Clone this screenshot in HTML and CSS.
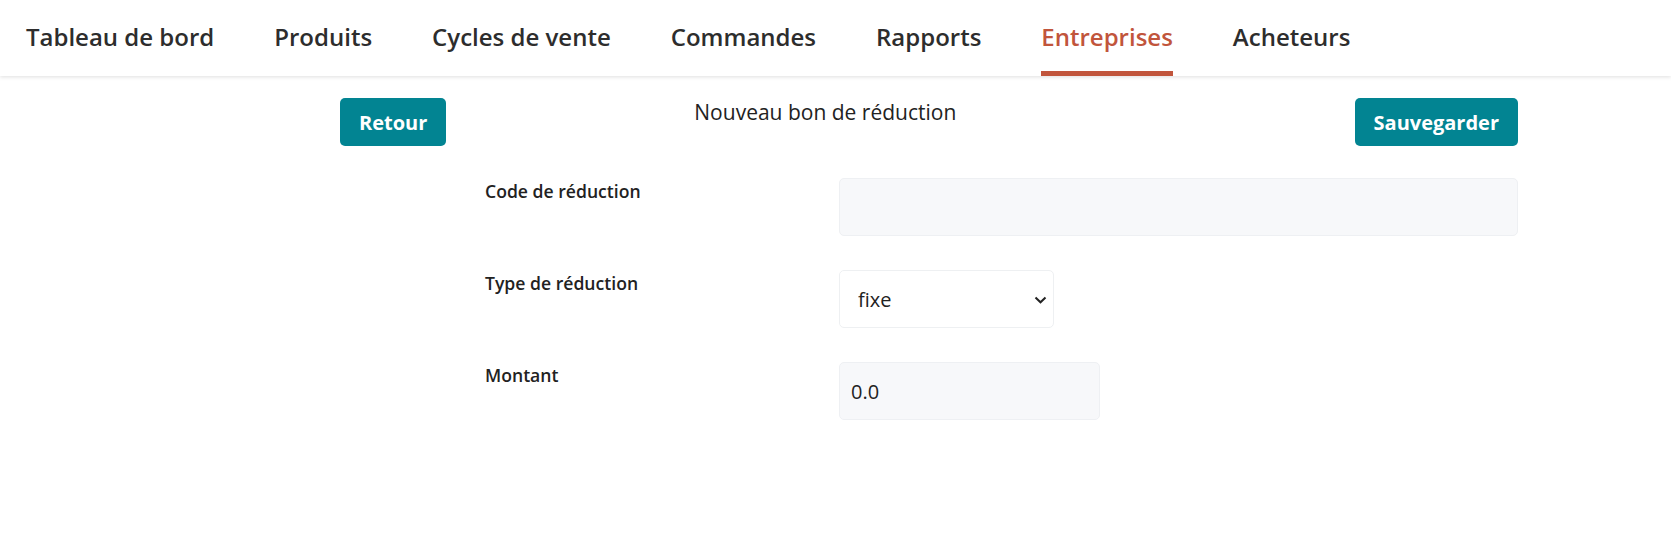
FILE: index.html
```html
<!DOCTYPE html>
<html lang="fr">
<head>
<meta charset="utf-8">
<title>Nouveau bon de réduction</title>
<link rel="stylesheet" href="styles.css">
</head>
<body>
<header class="topbar">
  <nav class="tabs">
    <a class="tab" href="#">Tableau de bord</a>
    <a class="tab" href="#">Produits</a>
    <a class="tab" href="#">Cycles de vente</a>
    <a class="tab" href="#">Commandes</a>
    <a class="tab" href="#">Rapports</a>
    <a class="tab tab-active" href="#">Entreprises</a>
    <a class="tab" href="#">Acheteurs</a>
  </nav>
</header>
<main class="page">
  <div class="toolbar">
    <button class="btn" type="button">Retour</button>
    <h1 class="title">Nouveau bon de réduction</h1>
    <button class="btn btn-save" type="button">Sauvegarder</button>
  </div>
  <form class="form">
    <div class="row">
      <label class="label" for="code">Code de réduction</label>
      <input class="input input-wide" id="code" type="text">
    </div>
    <div class="row">
      <label class="label" for="type">Type de réduction</label>
      <div class="select-wrap">
        <select class="select" id="type">
          <option>fixe</option>
          <option>pourcentage</option>
        </select>
        <svg class="chevron" width="13" height="8" viewBox="0 0 13 8" aria-hidden="true"><path d="M1.5 1.5 L6.5 6.3 L11.5 1.5" fill="none" stroke="#222" stroke-width="2"/></svg>
      </div>
    </div>
    <div class="row">
      <label class="label" for="amount">Montant</label>
      <input class="input input-amount" id="amount" type="text" value="0.0">
    </div>
  </form>
</main>
</body>
</html>
```

FILE: styles.css
```css
* { box-sizing: border-box; }

body {
  margin: 0;
  font-family: "Open Sans", "Noto Sans", sans-serif;
  color: #222;
  background: #fff;
}

.topbar {
  height: 76px;
  background: #fff;
  box-shadow: 0 1px 4px rgba(0, 0, 0, 0.13);
}

.tabs {
  display: flex;
  gap: 60px;
  padding-left: 26px;
  height: 100%;
}

.tab {
  display: block;
  height: 76px;
  padding-top: 20px;
  border-bottom: 5px solid transparent;
  font-size: 24px;
  font-weight: 600;
  line-height: 33px;
  color: #2d2d2d;
  text-decoration: none;
}

.tab-active {
  color: #c1553c;
  border-bottom-color: #c1553c;
}

.page {
  padding: 22px 153px 0 340px;
}

.toolbar {
  display: flex;
  align-items: flex-start;
}

.btn {
  height: 48px;
  padding: 0 19px;
  border: 0;
  border-radius: 5px;
  background: #028492;
  color: #fff;
  font-family: inherit;
  font-size: 20px;
  font-weight: 700;
  cursor: pointer;
}

.btn-save {
  margin-left: auto;
}

.title {
  margin: 0 0 0 248px;
  font-size: 21px;
  font-weight: 400;
  line-height: 28px;
  color: #222;
}

.form {
  margin: 32px 0 0 145px;
  display: flex;
  flex-direction: column;
  gap: 34px;
}

.row {
  display: grid;
  grid-template-columns: 354px 1fr;
  align-items: start;
}

.label {
  font-size: 17.6px;
  font-weight: 600;
  line-height: 26px;
  color: #222;
}

.input {
  height: 58px;
  padding: 0 11px;
  border: 1px solid #eef0f3;
  border-radius: 5px;
  background: #f7f8fa;
  font-family: inherit;
  font-size: 20px;
  color: #222;
  outline: none;
}

.input-wide { width: 100%; }
.input-amount { width: 261px; }

.select-wrap {
  position: relative;
  width: 215px;
}

.select {
  appearance: none;
  -webkit-appearance: none;
  width: 100%;
  height: 58px;
  padding: 0 18px;
  border: 1px solid #eef0f2;
  border-radius: 5px;
  background: #fff;
  font-family: inherit;
  font-size: 20px;
  color: #222;
}

.chevron {
  position: absolute;
  right: 7px;
  top: 26px;
  pointer-events: none;
}
```
